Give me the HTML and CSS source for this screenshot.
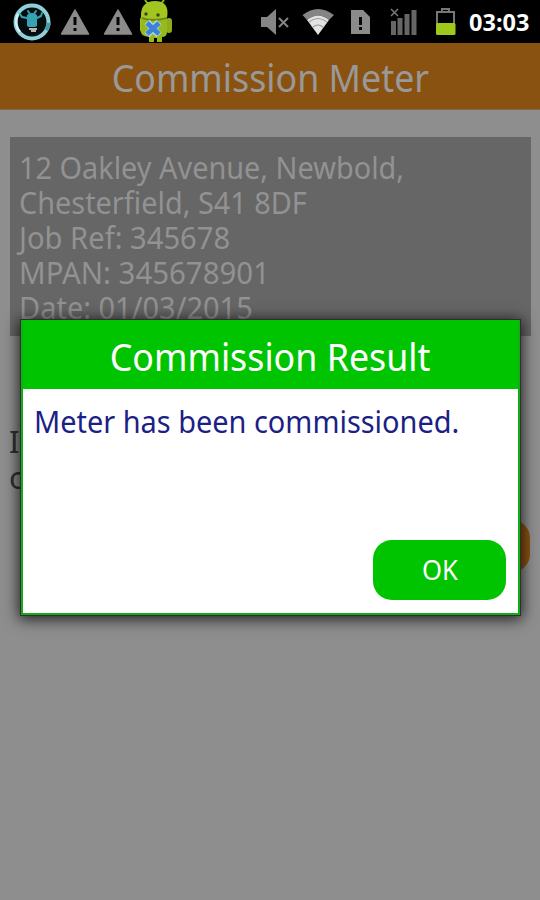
FILE: index.html
```html
<!DOCTYPE html>
<html lang="en">
<head>
<meta charset="utf-8">
<title>Commission Meter</title>
<link rel="stylesheet" href="styles.css">
</head>
<body>
<header class="status">
  <svg class="status-icons" width="180" height="43" viewBox="0 0 180 43">
    <circle cx="32" cy="22" r="16.5" fill="#050d10" stroke="#8ed0d8" stroke-width="4"/>
    <path d="M20 32a16 16 0 0 1-2-18" fill="none" stroke="#d4f2f4" stroke-width="2.5"/>
    <path d="M46 30a16 16 0 0 0 3-7" fill="none" stroke="#479aa6" stroke-width="4"/>
    <path d="M27 15q5-4 10 0v11q-1 1-3 1h-4q-3 0-3-2z" fill="#35a3b2"/>
    <path d="M27 18l-5-1-2-3M37 18l4-2 1-3M28 11l2 3M36 11l-2 3" fill="none" stroke="#35a3b2" stroke-width="2" stroke-linecap="round"/>
    <path d="M29 29h8M31 31h5" stroke="#b8b5b0" stroke-width="2"/>
    <g id="warn"><path d="M75 10L88.500 34H61.500Z" fill="#8b8b8b" stroke="#8b8b8b" stroke-width="1.500" stroke-linejoin="round"/><path d="M75 17v8M75 28v3" stroke="#050505" stroke-width="3"/></g>
    <use href="#warn" x="43"/>
    <path d="M145 0l3 4M164 0l-3 4" stroke="#92b51c" stroke-width="2"/>
    <path d="M141 18q-1-17 14-17t12 17z" fill="#a2c51f"/>
    <rect x="166" y="18" width="6" height="15" rx="3" fill="#8dae1a"/>
    <rect x="140" y="17" width="5" height="15" rx="2.500" fill="#a2c51f"/>
    <path d="M141 18h26v14q0 5-5 5v5h-5v-4h-3v4h-5v-5q-8-1-8-5z" fill="#96b91d"/>
    <circle cx="146" cy="14" r="1.700" fill="#3b4816"/><circle cx="158" cy="15" r="1.700" fill="#3b4816"/>
    <path d="M142 18q10 4 25 0" fill="none" stroke="#687f1b" stroke-width="1.500"/>
    <path d="M147 22l12 13M159 22l-12 13" stroke="#b7d5dc" stroke-width="7"/>
    <path d="M147 23l12 11M159 23l-12 11" stroke="#3b82da" stroke-width="5"/>
  </svg>
  <svg class="status-icons" width="210" height="43" viewBox="250 0 210 43">
    <path d="M261 17h6l9-8v26l-9-8h-6z" fill="#858585"/>
    <path d="M279 18l9 9M288 18l-9 9" stroke="#858585" stroke-width="2"/>
    <path d="M302.500 15Q318 3 334 15L329 20Q318 11 307 20Z" fill="#858585"/>
    <path d="M307 20Q318 11 329 20L318 35Z" fill="#e2e2e2"/>
    <path d="M309 22Q318 15 327 22M313 27Q318 23 323 27" fill="none" stroke="#999" stroke-width="1.200"/>
    <path d="M351 10h12l7 7v17h-19z" fill="#8b8b8b"/><path d="M360.500 17v8M360.500 27v3" stroke="#080808" stroke-width="3"/>
    <path d="M391 21h5v14h-5zM397.500 18h5v17h-5zM404.500 14h5v21h-5zM411.500 10h5v25h-5z" fill="#666"/>
    <path d="M391 9l7 7M398 9l-7 7" stroke="#777" stroke-width="1.500"/>
    <path d="M437 24V12h17v12M442 12V9h7v3" fill="none" stroke="#777" stroke-width="2"/>
    <rect x="436" y="23" width="19.500" height="12" rx="1.500" fill="#9dc91a"/>
  </svg>
  <time class="clock"><span>03:03</span></time>
</header>
<main class="page">
  <h1 class="title"><span>Commission Meter</span></h1>
  <section class="job">
    <p class="l1">12 Oakley Avenue, Newbold,</p>
    <p class="l2">Chesterfield, S41 8DF</p>
    <p class="l3">Job Ref: 345678</p>
    <p class="l4">MPAN: 345678901</p>
    <p class="l5">Date: 01/03/2015</p>
  </section>
  <div class="note"><p>I</p><p>c</p></div>
  <div class="action"></div>
</main>
<div class="dialog" role="dialog">
  <h2 class="dialog-title"><span>Commission Result</span></h2>
  <div class="dialog-body">
    <p class="message">Meter has been commissioned.</p>
    <button class="ok"><span>OK</span></button>
  </div>
</div>
</body>
</html>
```
FILE: styles.css
```css
* { box-sizing: border-box; }
body { margin: 0; width: 540px; height: 900px; overflow: hidden; position: relative; background: #8e8e8e; font-family: "Noto Sans", sans-serif; }
h1, h2, p { margin: 0; font-weight: 400; white-space: nowrap; }
span { display: inline-block; }
.status { height: 43px; background: #000; display: flex; }
.status-icons { flex: none; display: block; }
.status-icons + .status-icons { margin-left: 70px; }
.clock { color: #fff; font-size: 23.5px; font-weight: 700; line-height: 44px; margin-left: 9px; }
.title { height: 67px; background: #8a5210; color: #999; font-size: 37.5px; line-height: 69px; text-align: center; border-bottom: 1px solid #80664a; }
.title span, .dialog-title span { transform: scaleX(.954); }
.job { margin: 27px 9px 0 10px; height: 199px; padding: 13px 9px; background: #666; color: #929292; font-size: 31px; line-height: 35px; }
.job p { transform-origin: left; width: max-content; transform: scaleX(.931); }
.job .l3 { transform: scaleX(.94); }
.job .l4 { transform: scaleX(.948); }
.job .l5 { transform: scaleX(.935); }
.note { margin: 87px 0 0 9px; color: #303030; font-size: 31px; line-height: 36px; }
.action { margin: 25px 10px 0 auto; width: 140px; height: 52px; border-radius: 18px; background: #8a5210; }
.dialog { position: absolute; left: 21px; top: 320px; width: 499px; height: 295px; background: #fff; border: 2px solid #0fae16; border-top-color: #00c400; box-shadow: 0 0 0 1px #303030, 0 2px 14px 2px rgba(0,0,0,.8); }
.dialog-title { height: 67px; background: #00c400; color: #fff; font-size: 37.5px; line-height: 69px; text-align: center; }
.dialog-body { height: 224px; padding: 11px 12px 13px 11px; display: flex; flex-direction: column; justify-content: space-between; color: #1c1f86; font-size: 30.5px; line-height: 42px; }
.message { width: max-content; transform-origin: left; transform: scaleX(.948); }
.ok { align-self: flex-end; width: 133px; height: 60px; border: 0; border-radius: 19px; background: #00c400; color: #fff; font: 27px/60px "Noto Sans", sans-serif; padding: 0; }
.ok span { transform: scaleX(.95); }
```
